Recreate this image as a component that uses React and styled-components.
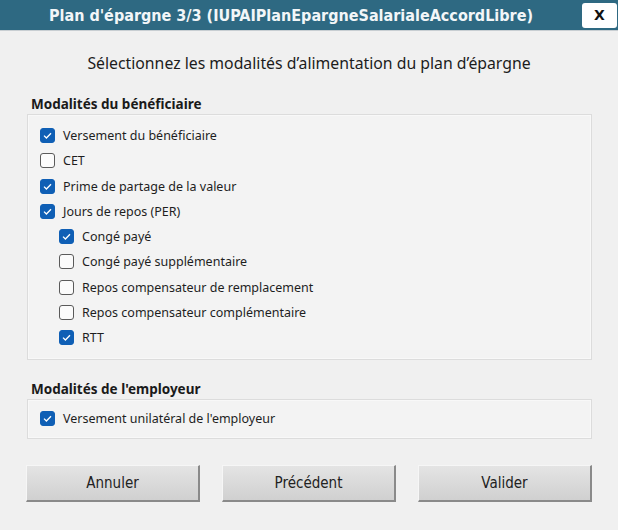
import React from "react";
import styled, { createGlobalStyle } from "styled-components";

const GlobalStyle = createGlobalStyle`
  html, body {
    margin: 0;
    padding: 0;
    background: #f0f0f0;
  }
`;

const Window = styled.div`
  width: 618px;
  height: 530px;
  background: #f0f0f0;
  font-family: "Noto Sans", "Open Sans", sans-serif;
  color: #1a1a1a;
  display: flex;
  flex-direction: column;
  overflow: hidden;
`;

const TitleBar = styled.div`
  height: 30px;
  background: #2e6982;
  display: flex;
  align-items: center;
  border-bottom: 1px solid #c8ced2;
`;

const Title = styled.div`
  flex: 1;
  text-align: center;
  color: #f2f6f8;
  font-family: "DejaVu Sans Condensed", "DejaVu Sans", sans-serif;
  font-weight: bold;
  font-size: 16px;
  padding-top: 1px;
`;

const CloseButton = styled.div`
  width: 35px;
  height: 25px;
  margin-right: 1px;
  background: #ffffff;
  border-radius: 3px;
  display: flex;
  align-items: center;
  justify-content: center;
  font-family: "DejaVu Sans", sans-serif;
  font-weight: bold;
  font-size: 14px;
  color: #111;
`;

const Heading = styled.div`
  text-align: center;
  font-size: 15.8px;
  margin: 21px 0 19px;
  color: #1c1c1c;
`;

const Section = styled.div`
  padding: 0 26px 0 27px;
  margin-bottom: ${(p) => p.gap || 0}px;
`;

const SectionLabel = styled.div`
  font-weight: bold;
  font-size: 13.5px;
  padding-left: 4px;
  height: 21px;
  line-height: 23px;
`;

const GroupBox = styled.div`
  border: 1px solid #dcdcdc;
  box-shadow: inset 0 0 0 1px #f8f8f8;
  background: #f3f3f3;
  padding: ${(p) => p.pad};
`;

const Row = styled.div`
  display: flex;
  align-items: center;
  height: 25.25px;
  padding-left: ${(p) => (p.indent ? 31 : 12)}px;
  gap: 8px;
  font-size: 12.5px;
  color: #1e1e1e;
`;

const Box = styled.span`
  width: 15px;
  height: 15px;
  box-sizing: border-box;
  border-radius: 3px;
  display: inline-flex;
  align-items: center;
  justify-content: center;
  background: ${(p) => (p.checked ? "#0f5fb5" : "#fbfbfb")};
  border: 1px solid ${(p) => (p.checked ? "#0f5fb5" : "#5a5a5a")};
  flex-shrink: 0;
`;

const ButtonBar = styled.div`
  display: flex;
  justify-content: space-between;
  padding: 0 26px 0 26px;
  margin-top: 26px;
`;

const Button = styled.div`
  width: 174px;
  height: 37px;
  box-sizing: border-box;
  display: flex;
  align-items: center;
  justify-content: center;
  background: linear-gradient(#e4e4e4, #d0d0d0);
  border-top: 1px solid #f6f6f6;
  border-left: 1px solid #f6f6f6;
  border-right: 2px solid #8a8a8a;
  border-bottom: 2px solid #8a8a8a;
  font-family: "DejaVu Sans Condensed", "DejaVu Sans", sans-serif;
  font-size: 15px;
  color: #222;
`;

function Checkbox({ checked, label, indent }) {
  return (
    <Row indent={indent}>
      <Box checked={checked}>
        {checked && (
          <svg width="9" height="7" viewBox="0 0 9 7">
            <path d="M1 3.6 L3.4 6 L8 1.2" fill="none" stroke="#fff" strokeWidth="1.3" />
          </svg>
        )}
      </Box>
      <span>{label}</span>
    </Row>
  );
}

const beneficiaire = [
  { label: "Versement du bénéficiaire", checked: true },
  { label: "CET", checked: false },
  { label: "Prime de partage de la valeur", checked: true },
  { label: "Jours de repos (PER)", checked: true },
  { label: "Congé payé", checked: true, indent: true },
  { label: "Congé payé supplémentaire", checked: false, indent: true },
  { label: "Repos compensateur de remplacement", checked: false, indent: true },
  { label: "Repos compensateur complémentaire", checked: false, indent: true },
  { label: "RTT", checked: true, indent: true },
];

export default function App() {
  return (
    <Window>
      <GlobalStyle />
      <TitleBar>
        <Title>Plan d'épargne 3/3 (IUPAIPlanEpargneSalarialeAccordLibre)</Title>
        <CloseButton>X</CloseButton>
      </TitleBar>
      <Heading>Sélectionnez les modalités d’alimentation du plan d’épargne</Heading>
      <Section gap={18}>
        <SectionLabel>Modalités du bénéficiaire</SectionLabel>
        <GroupBox pad="8px 0 9px">
          {beneficiaire.map((item) => (
            <Checkbox key={item.label} {...item} />
          ))}
        </GroupBox>
      </Section>
      <Section>
        <SectionLabel>Modalités de l'employeur</SectionLabel>
        <GroupBox pad="6px 0 6px">
          <Checkbox checked label="Versement unilatéral de l'employeur" />
        </GroupBox>
      </Section>
      <ButtonBar>
        <Button>Annuler</Button>
        <Button>Précédent</Button>
        <Button>Valider</Button>
      </ButtonBar>
    </Window>
  );
}
